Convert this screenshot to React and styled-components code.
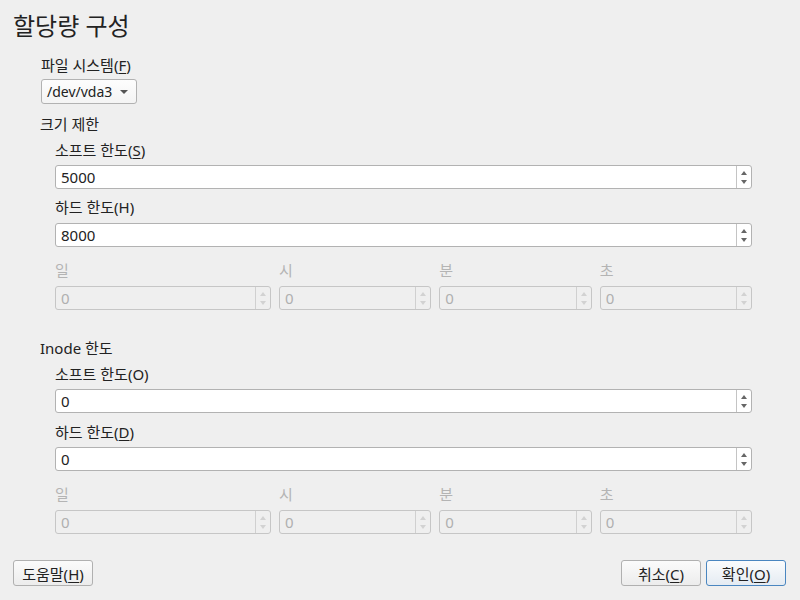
import React from 'react'
import styled, { createGlobalStyle } from 'styled-components'

const Global = createGlobalStyle`
  html, body {
    margin: 0;
    padding: 0;
    background: #efefef;
  }
  body {
    font-family: 'Noto Sans', 'Noto Sans CJK KR', sans-serif;
    font-size: 15px;
    color: #222;
  }
`

const Page = styled.div`
  height: 600px;
  box-sizing: border-box;
  display: flex;
  flex-direction: column;
  padding: 12px 14px 14px 13px;
`

const Form = styled.div`
  display: flex;
  flex-direction: column;
  padding-right: 34px;
`

const Title = styled.h1`
  margin: 0;
  font-size: 24px;
  font-weight: 400;
  line-height: 28px;
  color: #222;
`

const Section = styled.div`
  display: flex;
  flex-direction: column;
  padding-left: ${(p) => p.indent || 0}px;
  margin-top: ${(p) => p.top || 0}px;
`

const Label = styled.div`
  font-size: 15px;
  line-height: 18px;
  color: ${(p) => (p.disabled ? '#b4b4b4' : '#222')};
  margin-bottom: ${(p) => p.gap ?? 6}px;
`

const U = styled.span`
  text-decoration: underline;
  text-underline-offset: 2px;
`

const Combo = styled.div`
  align-self: flex-start;
  width: 96px;
  height: 25px;
  box-sizing: border-box;
  border: 1px solid #b2b2b2;
  border-radius: 3px;
  background: linear-gradient(#fdfdfd, #f4f4f4);
  display: flex;
  align-items: center;
  justify-content: space-between;
  padding: 0 8px 0 5px;
  font-size: 14px;
  color: #222;
`

const Caret = styled.span`
  width: 0;
  height: 0;
  border-left: 4px solid transparent;
  border-right: 4px solid transparent;
  border-top: 4px solid #555;
`

const SpinBox = styled.div`
  height: 24px;
  box-sizing: border-box;
  border: 1px solid ${(p) => (p.disabled ? '#c6c6c6' : '#b2b2b2')};
  border-radius: 3px;
  background: ${(p) => (p.disabled ? '#efefef' : '#fff')};
  display: flex;
  margin-bottom: ${(p) => p.after || 0}px;
`

const SpinValue = styled.div`
  flex: 1;
  display: flex;
  align-items: center;
  padding-left: 5px;
  font-size: 15px;
  color: ${(p) => (p.disabled ? '#b0b0b0' : '#222')};
`

const SpinButtons = styled.div`
  width: 14px;
  border-left: 1px solid ${(p) => (p.disabled ? '#d0d0d0' : '#c4c4c4')};
  display: flex;
  flex-direction: column;
  align-items: center;
  justify-content: center;
  gap: 5px;
`

const Arrow = styled.span`
  width: 0;
  height: 0;
  border-left: 3.5px solid transparent;
  border-right: 3.5px solid transparent;
  ${(p) => (p.up ? 'border-bottom' : 'border-top')}: 4px solid ${(p) => (p.disabled ? '#d2d2d2' : '#666')};
`

const TimeGrid = styled.div`
  display: grid;
  grid-template-columns: 216px 1fr 1fr 1fr;
  column-gap: 8px;
  padding-top: ${(p) => p.top || 0}px;
`

const Footer = styled.div`
  margin-top: auto;
  display: flex;
  align-items: center;
  gap: 5px;
`

const Button = styled.button`
  width: 80px;
  height: 26px;
  box-sizing: border-box;
  border: 1px solid ${(p) => (p.primary ? '#4a86c0' : '#b0b0b0')};
  border-radius: 3px;
  background: ${(p) =>
    p.primary ? 'linear-gradient(#fbfcfd, #e4ebf2)' : 'linear-gradient(#fbfbfb, #ececec)'};
  font-family: 'Noto Sans', 'Noto Sans CJK KR', sans-serif;
  font-size: 15px;
  color: #222;
  padding: 0;
  &:first-child {
    margin-right: auto;
  }
`

const Spin = ({ value, disabled, after }) => (
  <SpinBox disabled={disabled} after={after}>
    <SpinValue disabled={disabled}>{value}</SpinValue>
    <SpinButtons disabled={disabled}>
      <Arrow up disabled={disabled} />
      <Arrow disabled={disabled} />
    </SpinButtons>
  </SpinBox>
)

const TimeRow = ({ top }) => (
  <TimeGrid top={top}>
    {['일', '시', '분', '초'].map((t) => (
      <div key={t}>
        <Label disabled gap={7}>{t}</Label>
        <Spin value="0" disabled />
      </div>
    ))}
  </TimeGrid>
)

export default function App() {
  return (
    <>
      <Global />
      <Page>
        <Title>할당량 구성</Title>
        <Form>
          <Section indent={28} top={16}>
            <Label gap={5}>
              파일 시스템(<U>F</U>)
            </Label>
            <Combo>
              /dev/vda3
              <Caret />
            </Combo>
          </Section>

          <Section indent={27} top={11}>
            <Label gap={8}>크기 제한</Label>
            <Section indent={15}>
              <Label>
                소프트 한도(<U>S</U>)
              </Label>
              <Spin value="5000" after={9} />
              <Label gap={7}>하드 한도(H)</Label>
              <Spin value="8000" />
              <TimeRow top={14} />
            </Section>
          </Section>

          <Section indent={27} top={29}>
            <Label gap={8}>Inode 한도</Label>
            <Section indent={15}>
              <Label>소프트 한도(O)</Label>
              <Spin value="0" after={10} />
              <Label gap={6}>
                하드 한도(<U>D</U>)
              </Label>
              <Spin value="0" />
              <TimeRow top={14} />
            </Section>
          </Section>
        </Form>

        <Footer>
          <Button>
            도움말(<U>H</U>)
          </Button>
          <Button>
            취소(<U>C</U>)
          </Button>
          <Button primary>
            확인(<U>O</U>)
          </Button>
        </Footer>
      </Page>
    </>
  )
}
